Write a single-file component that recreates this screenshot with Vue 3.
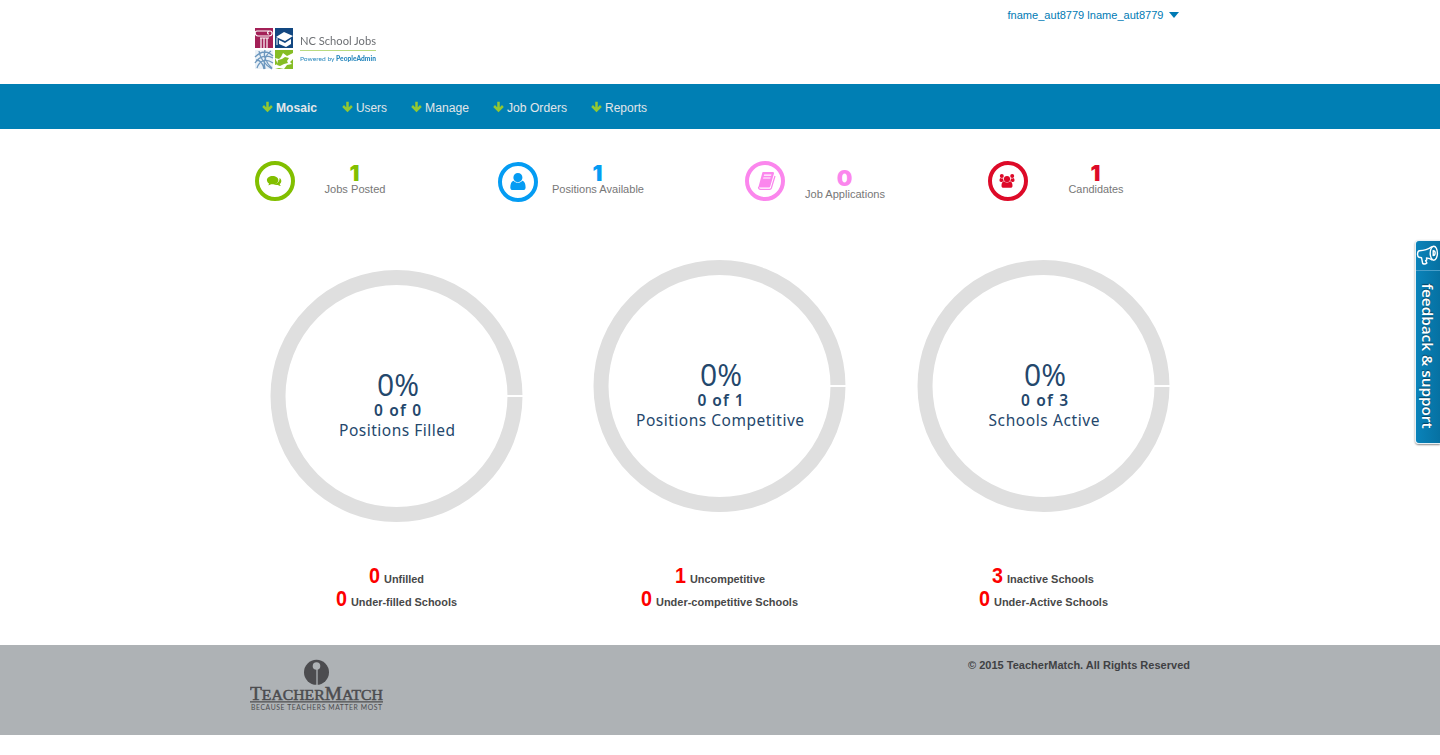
<script setup>
const menu = [
  { label: 'Mosaic', w: 41, gap: 25 }, { label: 'Users', w: 31, gap: 24 },
  { label: 'Manage', w: 44, gap: 24 }, { label: 'Job Orders', w: 60, gap: 24 },
  { label: 'Reports', w: 42, gap: 0 },
]
const stats = [
  { kind: 'chat', value: 1, label: 'Jobs Posted', w: 61 },
  { kind: 'user', value: 1, label: 'Positions Available', w: 92 },
  { kind: 'book', value: 0, label: 'Job Applications', w: 80 },
  { kind: 'group', value: 1, label: 'Candidates', w: 55 },
]
const charts = [
  { sub: '0 of 0', label: 'Positions Filled', w: 116, sw: 47 },
  { sub: '0 of 1', label: 'Positions Competitive', w: 168, sw: 46 },
  { sub: '0 of 3', label: 'Schools Active', w: 111, sw: 47 },
]
const counts = [
  [{ n: 0, t: 'Unfilled', w: 40 }, { n: 0, t: 'Under-filled Schools', w: 106 }],
  [{ n: 1, t: 'Uncompetitive', w: 75 }, { n: 0, t: 'Under-competitive Schools', w: 142 }],
  [{ n: 3, t: 'Inactive Schools', w: 87 }, { n: 0, t: 'Under-Active Schools', w: 114 }],
]
</script>

<template>
  <div class="page">
    <header class="wrap header">
      <svg class="logo" width="130" height="50" viewBox="0 0 130 50">
        <path fill="#a32057" d="M4 3h18v20H4z" />
        <path fill="#124781" d="M24 3h18v20H24z" />
        <path fill="#86bd25" d="M24 25h18v19H24z" />
        <path fill="#eaf1f7" d="M4 25h18v19H4z" />
        <g fill="none" stroke="#fff" stroke-width="1.2">
          <path d="M6 11h12c4 0 4-5 1-5s-3 3-1 3M7 11c-3 0-4-5-1-5h13M9 13h9M10 13v10M13 13v10M16 13v10" />
        </g>
        <path fill="#fff" d="m25 12 8-5 9 4-8 5zM28 15l6 3 6-4v5l-5 3-7-3z" />
        <path fill="none" stroke="#fff" d="M26 13v7" />
        <g fill="none" stroke="#6c97be" stroke-width="1.3">
          <path d="M4 32c7-7 13-6 18-1M4 38c5-8 13-8 18-5M6 43c3-9 10-9 16-5M8 26c1 7 5 13 13 18M14 25c-2 6 1 13 7 18M20 26c-6 4-8 12-6 18M5 35c5 0 7 4 8 9" />
        </g>
        <path fill="#fff" d="M24 33l4 1 2-2 2-4 4 3 6-3v6l-3 3 2 2-5 1-3 4-5-1-4 1v-4l3-1z" />
        <path fill="#86bd25" d="M27 35l4-1 3-2 4 1-2 3 1 2-4 1-4 2-3-1z" />
        <text x="49" y="20" class="logo-title" textLength="76" lengthAdjust="spacingAndGlyphs">NC School Jobs</text>
        <path stroke="#b9da80" d="M49 25.5h76" />
        <text x="49" y="36" class="logo-sub" textLength="76" lengthAdjust="spacingAndGlyphs">Powered by <tspan font-weight="900">PeopleAdmin</tspan></text>
      </svg>
      <div class="account">
        <svg width="172" height="16"><text x="0.5" y="11.5" textLength="156" lengthAdjust="spacingAndGlyphs">fname_aut8779 lname_aut8779</text><path d="M162 5h10l-5 6z" /></svg>
      </div>
    </header>

    <nav class="nav">
      <div class="wrap menu">
        <a v-for="m in menu" :key="m.label" :style="{ marginRight: m.gap + 'px' }">
          <svg width="11" height="12" viewBox="0 0 11 12"><path fill="none" stroke="#93c832" stroke-width="2.5" d="M5.5 .8v8.3M1.1 5l4.4 4.4L9.9 5" /></svg>
          <svg :width="m.w" height="16" class="menu-text"><text x="0" y="13" :textLength="m.w" lengthAdjust="spacingAndGlyphs">{{ m.label }}</text></svg>
        </a>
      </div>
    </nav>

    <main class="wrap">
      <section class="stats">
        <div v-for="s in stats" :key="s.kind" class="stat" :class="s.kind">
          <div class="ring">
            <svg width="40" height="40" viewBox="0 0 40 40" fill="currentColor">
              <circle cx="20" cy="20" r="18" fill="none" stroke="currentColor" stroke-width="4" />
              <template v-if="s.kind === 'chat'">
                <path d="M23.4 19c0 2.7-2.5 4.3-5.8 4.3l-1.5-.1c-1 .8-2 1.1-3.1 1.1.7-.6 1-1.2 1.1-1.8-1.3-.7-2.2-1.9-2.2-3.5 0-2.3 2.5-4 5.7-4s5.8 1.7 5.8 4z" />
                <path d="M24.5 17.1c1.1.7 1.8 1.8 1.8 3 0 1.2-.6 2.3-1.6 3 .1.8.5 1.5 1.2 2-1.1 0-2.1-.3-3-1.1-1.7.3-3.3-.1-4.5-1 3.7-.1 6.5-2.3 6.1-5.9z" />
              </template>
              <path v-else-if="s.kind === 'user'" d="M19.9 11a4.5 4.5 0 0 1 4.5 4.6c0 2.6-2 4.7-4.5 4.7s-4.5-2.1-4.5-4.7a4.5 4.5 0 0 1 4.5-4.6zm-4.2 7.7c2 2.8 6.4 2.8 8.5 0 2.4.5 3.4 3.4 3.4 6.8 0 1.7-1 2.6-2.7 2.6H15c-1.7 0-2.7-.9-2.7-2.6 0-3.4 1-6.2 3.4-6.8z" />
              <template v-else-if="s.kind === 'book'">
                <path fill-rule="evenodd" d="M18.2 11h9.3c1.2 0 1.7.8 1.4 1.8l-3.7 12.6c-.3.8-.8 1.2-1.7 1.2h-8.2c-1.2 0-1.8-.8-1.5-1.8l3.3-12.4c.1-.7.4-1.4 1.1-1.4zm1 2.5-.4 1.2h7.3l.4-1.2zm-.8 2.9-.4 1.2h7.3l.4-1.2z" />
                <path fill="none" stroke="currentColor" stroke-width="1.2" d="M30 15l-3.6 12c-.3.9-.8 1.3-1.7 1.3h-9c-1.7 0-2.5-1-2-2.6" />
              </template>
              <template v-else>
                <circle cx="19" cy="18" r="3.1" /><circle cx="13.8" cy="15" r="2" /><circle cx="24.2" cy="15" r="2" />
                <path d="M16 20.3c1.8 1.7 4.3 1.7 6 0 1.8.3 2.5 2 2.5 4.4 0 1.3-.7 2.1-2 2.1h-7c-1.3 0-2-.8-2-2.1 0-2.4.7-4.1 2.5-4.4zM12.6 17c1 .6 1.9.6 2.6.3-.2 1.1.1 2 .7 2.7-.8 0-1.4.3-1.9.9h-1c-1 0-1.5-.5-1.5-1.3 0-1.1.1-2.2 1.1-2.6zm12.8 0c-1 .6-1.9.6-2.6.3.2 1.1-.1 2-.7 2.7.8 0 1.4.3 1.9.9h1c1 0 1.5-.5 1.5-1.3 0-1.1-.1-2.2-1.1-2.6z" />
              </template>
            </svg>
          </div>
          <svg class="stat-text" width="120" height="40">
            <text class="value" x="59.5" y="20" text-anchor="middle">{{ s.value }}</text>
            <text class="caption" x="60" y="32" text-anchor="middle" :textLength="s.w" lengthAdjust="spacingAndGlyphs">{{ s.label }}</text>
          </svg>
        </div>
      </section>

      <section class="charts">
        <svg v-for="c in charts" :key="c.label" class="chart" width="252" height="252" viewBox="0 0 252 252">
          <circle cx="126.5" cy="126" r="118.5" fill="none" stroke="#dfdfdf" stroke-width="15" />
          <path d="M236 126h17" stroke="#fff" stroke-width="2" />
          <text class="pct" x="128" y="126" text-anchor="middle" textLength="42" lengthAdjust="spacingAndGlyphs">0%</text>
          <text class="sub" x="127.5" y="146" text-anchor="middle" :textLength="c.sw">{{ c.sub }}</text>
          <text class="label" x="127" y="166" text-anchor="middle" :textLength="c.w">{{ c.label }}</text>
        </svg>
      </section>

      <section class="counts">
        <div v-for="(set, i) in counts" :key="i">
          <div v-for="r in set" :key="r.t" class="row">
            <svg :width="r.w + 15" height="23">
              <text class="num" x="0" y="18" textLength="11" lengthAdjust="spacingAndGlyphs">{{ r.n }}</text>
              <text class="desc" x="15" y="18" :textLength="r.w" lengthAdjust="spacingAndGlyphs">{{ r.t }}</text>
            </svg>
          </div>
        </div>
      </section>
    </main>

    <footer class="footer">
      <div class="wrap foot">
        <svg width="134" height="60" viewBox="0 0 134 60" fill="#4c4c4f">
          <circle cx="66.5" cy="17.3" r="12.5" />
          <path d="M67 12v19" stroke="#aeb2b5" stroke-width="1.3" />
          <circle cx="66.5" cy="11" r="3.8" fill="#aeb2b5" />
          <text class="tm" x="0" y="44.5" textLength="133" lengthAdjust="spacingAndGlyphs"><tspan font-size="19">T</tspan>EACHER<tspan font-size="19">M</tspan>ATCH</text>
          <path d="M0 46.3h133v1.2H0z" />
          <text class="tagline" x="1" y="55" textLength="131">BECAUSE TEACHERS MATTER MOST</text>
        </svg>
        <svg class="copyright" width="222" height="16"><text x="0" y="12" textLength="222" lengthAdjust="spacingAndGlyphs">© 2015 TeacherMatch. All Rights Reserved</text></svg>
      </div>
    </footer>

    <aside class="feedback">
      <svg width="24" height="202" viewBox="0 0 24 202">
        <g fill="none" stroke="#fff" stroke-width="1.4" stroke-linejoin="round">
          <path d="M16 5.5C12 8.5 7 9.7 3.5 9.7 1 10 1 15.5 3 16.3l2.5.4 1.2 5.8c1.4.7 3.2.4 4.2-.5l-1.3-2.4 1.2-.7-.3-2c2 .2 4 .8 6 2.2" />
          <ellipse cx="17.8" cy="12.2" rx="3.6" ry="7" />
          <path d="M17.2 9.6c2.6 0 2.6 5 0 5z" />
        </g>
        <path d="M0 29.5h24" stroke="#4b9fc9" />
        <text class="fb-text" transform="translate(6 42.5) rotate(90)" textLength="145" lengthAdjust="spacingAndGlyphs">feedback &amp; support</text>
      </svg>
    </aside>
  </div>
</template>

<style>
body { margin: 0; background: #fff; overflow: hidden; }
</style>

<style scoped>
.page { position: relative; height: 755px; font-family: "Liberation Sans", Arial, sans-serif; overflow: hidden; }
.wrap { width: 940px; margin: 0 auto; }
svg { display: block; }
.header { height: 84px; display: flex; justify-content: space-between; }
.logo { margin: 25px 0 0 1px; filter: blur(.35px); }
.logo-title { font: 11.5px Lato, sans-serif; fill: #6c6f73; }
.logo-sub { font: 6.5px Lato, sans-serif; fill: #2787bd; }
.account { margin: 7px 11px 0 0; font-size: 11px; }
.account svg { fill: #007ab4; }
.nav { height: 45px; background: #007fb4; }
.menu { display: flex; align-items: center; height: 45px; }
.menu a { display: flex; align-items: center; gap: 3px; }
.menu a:first-child { margin-left: 12px; font-weight: bold; }
.menu-text { fill: #e2e6e9; font-size: 12px; overflow: visible; }
.stats { display: grid; grid-template-columns: 243px 247px 243px 202px; padding: 32px 0 0 5px; height: 99px; }
.stat { display: flex; }
.chat { color: #82bf00; }
.user { color: #049cf3; }
.user .ring { margin-top: 1px; }
.user .stat-text { margin-left: -.5px; }
.book { color: #fb86ed; }
.book .stat-text { margin-top: 5px; }
.group { color: #dd0a28; }
.group .stat-text { margin-left: 7.5px; }
.stat-text { fill: currentColor; overflow: visible; }
.value { font: 900 22px Inter, sans-serif; }
.caption { font-size: 11px; fill: #777; }
.charts { display: flex; gap: 72px; padding-left: 20px; height: 305px; }
.chart { flex: none; overflow: visible; fill: #24476c; }
.chart:first-child { margin-top: 10px; margin-right: -1px; }
.pct { font: 400 31px "Open Sans", sans-serif; }
.sub { font: 600 15.5px "Noto Sans", sans-serif; }
.label { font: 15.5px "Noto Sans", sans-serif; }
.counts { display: grid; grid-template-columns: repeat(3, 323.3px); margin-left: -15px; height: 80px; }
.row { display: flex; justify-content: center; height: 23px; }
.row svg { overflow: visible; }
.num { font-size: 21.5px; font-weight: bold; fill: #fd0000; }
.desc { font-size: 11px; font-weight: bold; fill: #484848; }
.footer { height: 90px; background: #aeb2b5; }
.foot { display: flex; justify-content: space-between; padding-top: 10px; }
.tm { font: 400 15.5px "Liberation Serif", serif; stroke: #4c4c4f; stroke-width: .5px; }
.tagline { font: 6.8px Lato, sans-serif; }
.copyright { margin-top: 2px; overflow: visible; font-size: 11px; font-weight: bold; fill: #404144; }
.feedback { position: absolute; right: 0; top: 240px; width: 25px; height: 204px; border: 1px solid #e8f1f5; border-right: 0; border-radius: 4px 0 0 4px; background: linear-gradient(90deg, #0a83ba, #0671a2); box-shadow: 0 1px 2px #888; box-sizing: border-box; }
.fb-text { font: 600 15px "Open Sans", sans-serif; fill: #fff; text-shadow: -1px 0 1px #06405d; }
</style>
